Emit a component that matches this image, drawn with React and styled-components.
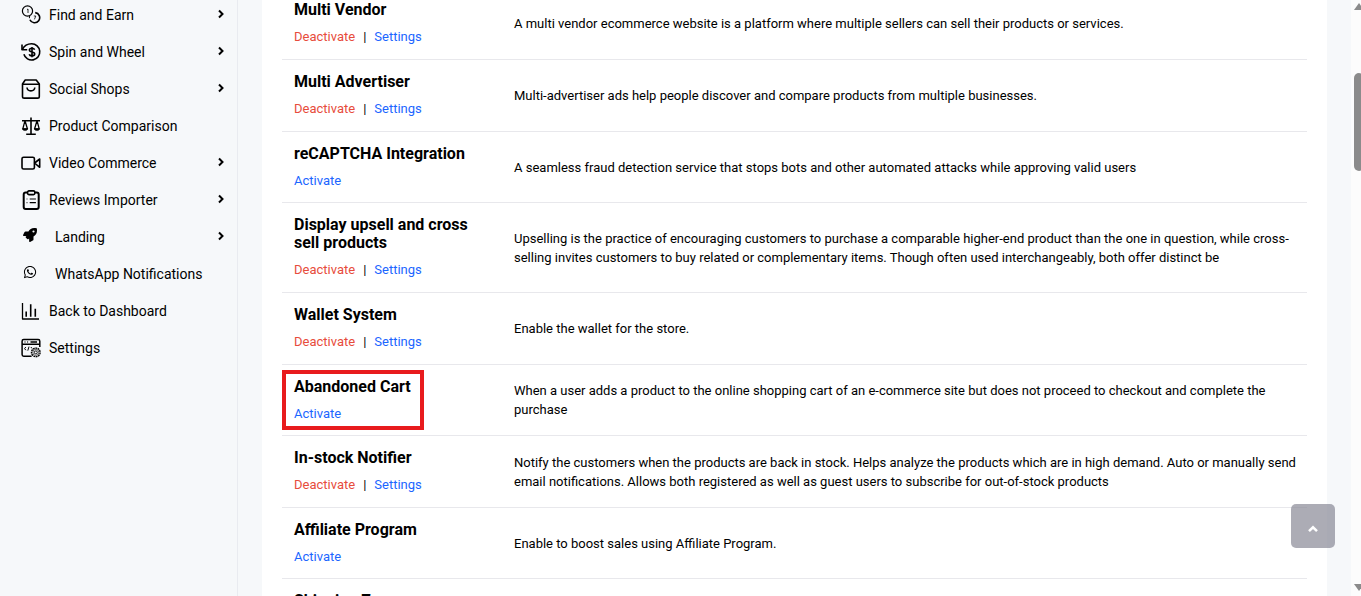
import styled, { createGlobalStyle, css } from 'styled-components';
import { FaRocket, FaWhatsapp } from 'react-icons/fa';

const GlobalStyle = createGlobalStyle`
    * {
        box-sizing: border-box;
    }

    body {
        margin: 0;
        background: #f6f8fa;
        color: #000;
        font-family: Roboto, "Liberation Sans", sans-serif;
        font-size: 13px;
        overflow: hidden;
    }
`;

const CoinsIcon = () => (
    <LineIcon viewBox="0 0 20 20">
        <circle cx="6.5" cy="6" r="5.1" strokeWidth="1.2" />
        <path d="M6 4.6l1-.6v4" strokeWidth=".8" />
        <path d="M14.2 7.6a5.1 5.1 0 1 1-5.3 7.1" strokeWidth="1.6" />
        <path d="M8.4 13.2a5.2 5.2 0 0 1 .4-2.3" strokeWidth="1" />
        <path d="M12.8 11h2l-1.4 3.4" strokeWidth=".8" />
    </LineIcon>
);

const RefundIcon = () => (
    <LineIcon viewBox="0 0 20 20">
        <path d="M1 2.4v5.4h5.2" />
        <path d="M1.2 7.6C3.2 3.8 6.7 1.8 10.6 1.8a8.1 8.1 0 1 1-7.7 10.4" />
        <path d="M13.600 7.8c-.3-1-1.2-1.5-2.6-1.5-1.6 0-2.6.7-2.6 1.8 0 2.7 5.3 1.1 5.3 3.9 0 1.2-1.1 1.9-2.7 1.9-1.5 0-2.5-.6-2.8-1.7M11 4.9v10.4" />
    </LineIcon>
);

const BagIcon = () => (
    <LineIcon viewBox="0 0 20 20">
        <path d="M4.2 1h11L18.300 5v12.400c0 1-.7 1.700-1.700 1.700H3.200c-1 0-1.700-.7-1.700-1.700V5z" />
        <path d="M1.500 5.200h16.800M6 8.500c.2 2.200 1.700 3.400 3.900 3.400s3.700-1.200 3.900-3.400" />
    </LineIcon>
);

const ScaleIcon = () => (
    <LineIcon viewBox="0 0 20 20">
        <path d="M10 1.4v16.8M1 4.7h18M5.2 18.3h9.6" />
        <path d="M4 4.7L1.8 12.8h4.6zM16 4.7l-2.4 8.1h4.6z" strokeWidth="1.3" />
        <path d="M1.3 12.8h5.5c-.5 1.3-1.5 1.8-2.7 1.8s-2.3-.5-2.8-1.8zM13.2 12.8h5.5c-.5 1.3-1.5 1.8-2.7 1.8s-2.3-.5-2.8-1.8z" fill="currentColor" strokeWidth=".5" />
    </LineIcon>
);

const CameraIcon = () => (
    <LineIcon viewBox="0 0 20 20">
        <rect x="1" y="4.2" width="12.4" height="11.8" rx="1.6" />
        <path d="M13.6 10l5.1-4v8.3z" />
    </LineIcon>
);

const ClipboardIcon = () => (
    <LineIcon viewBox="0 0 20 20">
        <rect x="2.7" y="2.6" width="15" height="16.4" rx="2" strokeWidth="2" />
        <rect x="6.6" y=".9" width="7.2" height="3.7" rx="1.3" fill="#f6f8fa" />
        <path d="M8.7 9h6.2M8.7 12.7h6.2M5.6 9h.8M5.6 12.7h.8" strokeWidth="1.2" />
    </LineIcon>
);

const ChartIcon = () => (
    <LineIcon viewBox="0 0 20 20">
        <path d="M1.5 2v16H18" strokeWidth="1.3" />
        <path d="M5.2 10.5v5.2M9.7 3.3v12.4M14.3 7.8v7.9" strokeWidth="1.6" />
    </LineIcon>
);

const PanelIcon = () => (
    <LineIcon viewBox="0 0 20 20">
        <path d="M10.6 18.2H2.7c-1 0-1.6-.6-1.6-1.6V3.2c0-1 .6-1.6 1.6-1.6h14.5c1 0 1.6.6 1.6 1.6V9M1.1 6.2h17.7" strokeWidth="1.5" />
        <path d="M3.6 4h.8M6.3 4h.8M9.5 4h6.5" strokeWidth="1.5" />
        <path d="M4.8 9l-1.2 1.6 1.2 1.6M8 8.6l-1.2 4M9.9 9l1 1.4" strokeWidth="1" />
        <circle cx="14.8" cy="14.4" r="4.3" strokeWidth="1.4" strokeDasharray="1.8 .6" />
        <circle cx="14.8" cy="14.4" r="3" strokeWidth=".6" />
        <circle cx="14.8" cy="14.4" r="1.5" strokeWidth=".9" />
    </LineIcon>
);

const Chevron = () => (
    <ChevronIcon viewBox="0 0 8 10" aria-hidden="true">
        <path d="M2 1.5L5.5 5 2 8.5" />
    </ChevronIcon>
);

const menu = [
    { label: 'Find and Earn', icon: CoinsIcon, more: true },
    { label: 'Spin and Wheel', icon: RefundIcon, more: true },
    { label: 'Social Shops', icon: BagIcon, more: true },
    { label: 'Product Comparison', icon: ScaleIcon },
    { label: 'Video Commerce', icon: CameraIcon, more: true },
    { label: 'Reviews Importer', icon: ClipboardIcon, more: true },
    { label: 'Landing', icon: FaRocket, more: true, small: true },
    { label: 'WhatsApp Notifications', icon: FaWhatsapp, small: true },
    { label: 'Back to Dashboard', icon: ChartIcon },
    { label: 'Settings', icon: PanelIcon },
];

const addons = [
    { name: 'Multi Vendor', active: true, text: 'A multi vendor ecommerce website is a platform where multiple sellers can sell their products or services.' },
    { name: 'Multi Advertiser', active: true, text: 'Multi-advertiser ads help people discover and compare products from multiple businesses.' },
    { name: 'reCAPTCHA Integration', text: 'A seamless fraud detection service that stops bots and other automated attacks while approving valid users' },
    { name: 'Display upsell and cross sell products', active: true, text: 'Upselling is the practice of encouraging customers to purchase a comparable higher-end product than the one in question, while cross-selling invites customers to buy related or complementary items. Though often used interchangeably, both offer distinct be' },
    { name: 'Wallet System', active: true, text: 'Enable the wallet for the store.' },
    { name: 'Abandoned Cart', marked: true, text: 'When a user adds a product to the online shopping cart of an e-commerce site but does not proceed to checkout and complete the purchase' },
    { name: 'In-stock Notifier', active: true, text: 'Notify the customers when the products are back in stock. Helps analyze the products which are in high demand. Auto or manually send email notifications. Allows both registered as well as guest users to subscribe for out-of-stock products' },
    { name: 'Affiliate Program', text: 'Enable to boost sales using Affiliate Program.' },
    { name: 'Shipping Zone', active: true, text: '' },
];

function Addon({ name, active, marked, text }) {
    return (
        <tr>
            <NameCell scope="row">
                {marked && <Marker />}
                <Title>{name}</Title>
                <Actions>
                    {active ? (
                        <>
                            <Action href="#deactivate" $danger>Deactivate</Action>
                            <Divider>|</Divider>
                            <Action href="#settings">Settings</Action>
                        </>
                    ) : (
                        <Action href="#activate">Activate</Action>
                    )}
                </Actions>
            </NameCell>
            <TextCell>{text}</TextCell>
        </tr>
    );
}

export default function App() {
    return (
        <Page>
            <GlobalStyle />
            <Sidebar>
                <Menu>
                    {menu.map(({ label, icon: Icon, more, small }) => (
                        <li key={label}>
                            <MenuLink href="#menu">
                                <IconBox $small={small}><Icon /></IconBox>
                                <Label>{label}</Label>
                                {more && <Chevron />}
                            </MenuLink>
                        </li>
                    ))}
                </Menu>
            </Sidebar>
            <Content>
                <Table>
                    <tbody>
                        {addons.map(addon => <Addon key={addon.name} {...addon} />)}
                    </tbody>
                </Table>
            </Content>
            <ScrollTrack aria-hidden="true">
                <ScrollArrow viewBox="0 0 10 8"><path d="M0 8l5-7 5 7z" /></ScrollArrow>
                <ScrollThumb />
                <ScrollArrow viewBox="0 0 10 8"><path d="M0 0h10L5 7z" /></ScrollArrow>
            </ScrollTrack>
            <TopButton type="button" aria-label="Back to top">
                <svg width="12" height="8" viewBox="0 0 12 8"><path d="M2 6.2L6 2.3l4 3.9" /></svg>
            </TopButton>
        </Page>
    );
}

const Page = styled.div`
    display: flex;
    height: 100vh;
    overflow: hidden;
`;

const Sidebar = styled.nav`
    flex: 0 0 238px;
    border-right: 1px solid #e9ebf0;
    overflow: hidden;
`;

const Menu = styled.ul`
    list-style: none;
    margin: -4px 0 0;
    padding: 0;
`;

const MenuLink = styled.a`
    display: flex;
    align-items: center;
    height: 37px;
    padding: 0 12px 0 21px;
    color: #000;
    font-size: 14px;
    text-decoration: none;
`;

const IconBox = styled.span`
    display: flex;
    width: 20px;
    margin-right: 8px;

    ${props => props.$small && css`
        width: 18px;
        margin-right: 16px;
        padding: 0 0 4px 2px;

        svg {
            width: 14px;
            height: 14px;
        }
    `}
`;

const LineIcon = styled.svg`
    width: 20px;
    height: 20px;
    fill: none;
    stroke: currentColor;
    stroke-width: 1.6;
    stroke-linejoin: round;
`;

const Label = styled.span`
    flex: 1;
    white-space: nowrap;
`;

const ChevronIcon = styled.svg`
    width: 8px;
    height: 10px;
    margin-bottom: 2px;
    fill: none;
    stroke: currentColor;
    stroke-width: 2;
`;

const Content = styled.main`
    flex: 1;
    min-width: 0;
    margin: 0 24px;
    padding: 0 20px;
    background: #fff;
    overflow: hidden;
`;

const Table = styled.table`
    width: 100%;
    margin-top: -12px;
    border-spacing: 0;
    table-layout: fixed;
`;

const NameCell = styled.th`
    position: relative;
    width: 220px;
    padding: 13px 12px 12px;
    border-bottom: 1px solid #e8e8ec;
    font-weight: 400;
    text-align: left;
    vertical-align: middle;
`;

const Title = styled.div`
    margin-bottom: 8px;
    font-size: 16px;
    font-weight: 700;
    line-height: 18px;
`;

const Actions = styled.div`
    display: flex;
    line-height: 19px;
`;

const Action = styled.a`
    color: ${props => props.$danger ? '#e74c3c' : '#1b66ff'};
    text-decoration: none;
`;

const Divider = styled.span`
    padding: 0 8px;
    line-height: 20px;
`;

const TextCell = styled.td`
    padding: 12px 8px 12px 12px;
    border-bottom: 1px solid #e8e8ec;
    line-height: 19px;
    vertical-align: middle;
`;

const Marker = styled.span`
    position: absolute;
    top: 5px;
    bottom: 5px;
    left: 0;
    width: 142px;
    border: 4px solid #e81b1d;
`;

const ScrollTrack = styled.div`
    display: flex;
    flex-direction: column;
    flex: 0 0 10px;
    padding: 2px 0 4px 3px;
    background: #fcfcfc;
    overflow: hidden;
`;

const ScrollArrow = styled.svg`
    width: 10px;
    height: 8px;
    fill: #8b8b8b;
    flex-shrink: 0;

    &:last-child {
        margin-top: auto;
    }
`;

const ScrollThumb = styled.div`
    width: 10px;
    height: 98px;
    margin-top: 63px;
    border-radius: 5px;
    background: #8b8b8b;
`;

const TopButton = styled.button`
    position: fixed;
    right: 26px;
    bottom: 48px;
    display: flex;
    align-items: center;
    justify-content: center;
    width: 44px;
    height: 44px;
    padding: 6px 0 0;
    border: 0;
    border-radius: 5px;
    background: rgba(137, 137, 149, 0.7);
    cursor: pointer;

    svg {
        fill: none;
        stroke: #fff;
        stroke-width: 2.5;
    }
`;
